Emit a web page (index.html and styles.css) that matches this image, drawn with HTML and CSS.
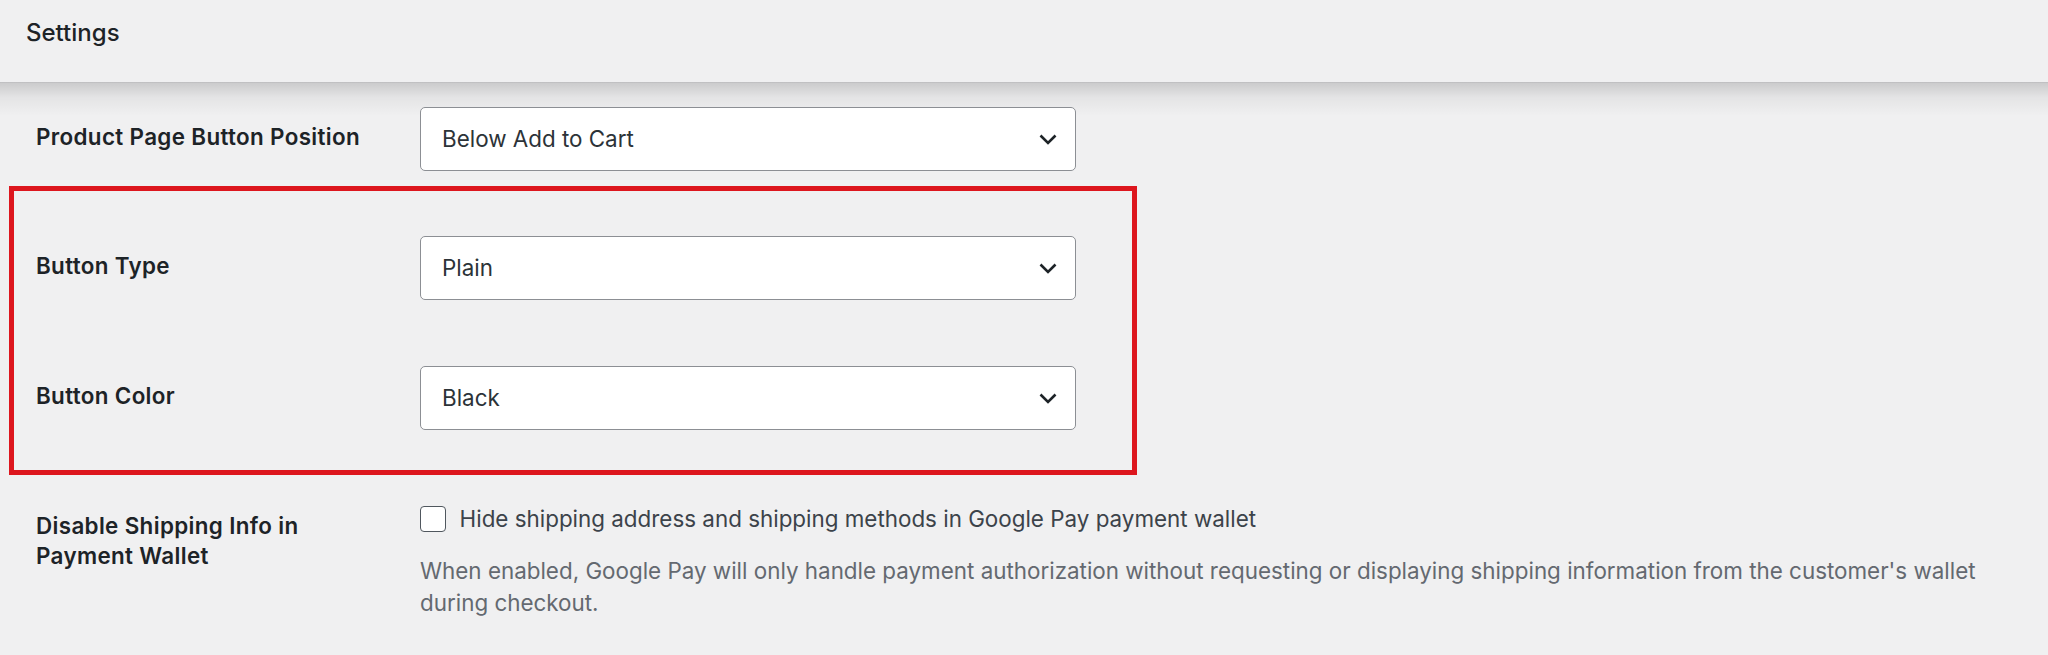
FILE: index.html
```html
<!DOCTYPE html>
<html lang="en">
<head>
  <meta charset="UTF-8">
  <meta name="viewport" content="width=device-width, initial-scale=1.0">
  <title>Settings</title>
  <link rel="stylesheet" href="styles.css">
</head>
<body>
  <header class="page-header">
    <h1>Settings</h1>
  </header>

  <main class="settings">
    <div class="field">
      <label class="field-label">Product Page Button Position</label>
      <div class="select">
        <span>Below Add to Cart</span>
        <svg class="chevron" width="18" height="11" viewBox="0 0 18 11"><path d="M1.5 1.5 L9 9 L16.5 1.5" /></svg>
      </div>
    </div>

    <div class="highlight">
      <div class="field">
        <label class="field-label">Button Type</label>
        <div class="select">
          <span>Plain</span>
          <svg class="chevron" width="18" height="11" viewBox="0 0 18 11"><path d="M1.5 1.5 L9 9 L16.5 1.5" /></svg>
        </div>
      </div>
      <div class="field">
        <label class="field-label">Button Color</label>
        <div class="select">
          <span>Black</span>
          <svg class="chevron" width="18" height="11" viewBox="0 0 18 11"><path d="M1.5 1.5 L9 9 L16.5 1.5" /></svg>
        </div>
      </div>
    </div>

    <div class="field field-top">
      <label class="field-label">Disable Shipping Info in Payment Wallet</label>
      <div class="field-control">
        <label class="check">
          <span class="checkbox"></span>
          Hide shipping address and shipping methods in Google Pay payment wallet
        </label>
        <p class="description">When enabled, Google Pay will only handle payment authorization without requesting or displaying shipping information from the customer's wallet during checkout.</p>
      </div>
    </div>
  </main>
</body>
</html>
```

FILE: styles.css
```css
body {
  margin: 0;
  background: #f0f0f1;
  font-family: Inter, "Liberation Sans", sans-serif;
  font-size: 22.4px;
  color: #1d2327;
}
.page-header {
  position: relative;
  height: 83px;
  box-sizing: border-box;
  padding: 19px 0 0 26px;
  border-bottom: 1px solid #e4e4e6;
}
.page-header::after {
  content: "";
  position: absolute;
  top: 100%;
  left: 0;
  right: 0;
  height: 34px;
  background: linear-gradient(to bottom, rgba(0, 0, 0, 0.16), rgba(0, 0, 0, 0.05) 45%, rgba(0, 0, 0, 0));
}
.page-header h1 {
  margin: 0;
  font-size: 24px;
  line-height: 28px;
  font-weight: 500;
  color: #1d2327;
}
.settings {
  padding-bottom: 20px;
}
.field {
  display: grid;
  grid-template-columns: 384px 656px;
  align-items: center;
  padding-left: 36px;
}
.settings > .field:first-child {
  margin-top: 24px;
}
.field-label {
  font-weight: 600;
  line-height: 30px;
  letter-spacing: 0.35px;
  padding: 0 10px 4px 0;
}
.select {
  position: relative;
  height: 64px;
  box-sizing: border-box;
  display: flex;
  align-items: center;
  justify-content: space-between;
  padding: 0 18px 2px 21px;
  background: #fff;
  border: 1.6px solid #8c8f94;
  border-radius: 5px;
  color: #2c3338;
}
.chevron {
  margin-top: 2px;
}
.chevron path {
  fill: none;
  stroke: #1d2327;
  stroke-width: 2.6;
}
.highlight {
  width: 1128px;
  box-sizing: border-box;
  margin: 15px 0 0 9px;
  padding: 45px 0 40px;
  border: 5px solid #dd161e;
  display: flex;
  flex-direction: column;
  gap: 66px;
}
.highlight .field {
  padding-left: 22px;
}
.field-top {
  align-items: start;
  grid-template-columns: 384px 1600px;
  margin-top: 28px;
}
.field-top .field-label {
  max-width: 320px;
  padding-top: 8px;
}
.check {
  display: flex;
  align-items: center;
  gap: 14px;
  line-height: 32px;
  color: #3c434a;
}
.checkbox {
  width: 25.6px;
  height: 25.6px;
  box-sizing: border-box;
  border: 1.8px solid #50575e;
  border-radius: 4px;
  background: #fff;
  flex-shrink: 0;
}
.description {
  margin: 20px 0 0;
  max-width: 1580px;
  line-height: 32px;
  color: #646970;
}
```
